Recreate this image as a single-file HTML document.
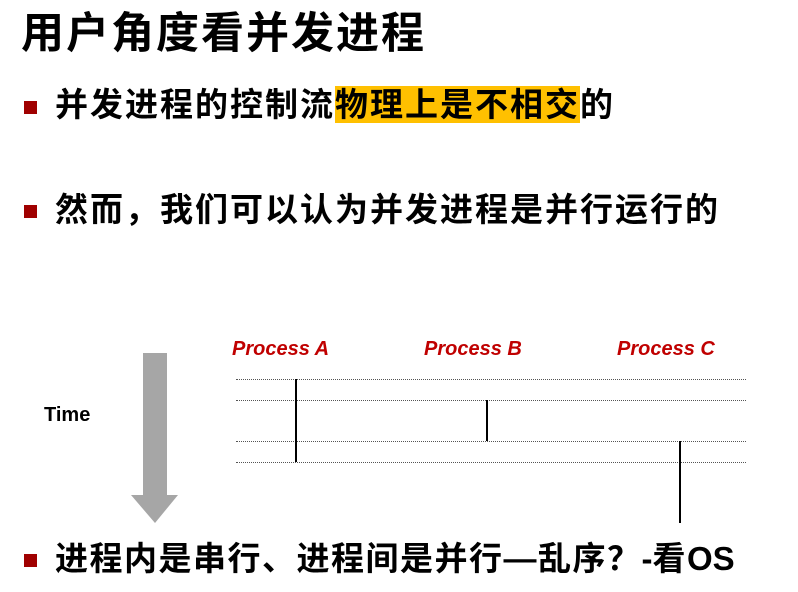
<!DOCTYPE html>
<html><head><meta charset="utf-8"><style>
body{margin:0;width:798px;height:592px;background:#fff;position:relative;overflow:hidden;font-family:"Liberation Sans","Noto Sans CJK SC",sans-serif;}
.t{position:absolute;left:21px;top:8px;font-size:43px;font-weight:bold;letter-spacing:2px;line-height:52px;color:#000;white-space:nowrap}
.b{position:absolute;left:55px;font-size:33px;font-weight:bold;letter-spacing:2px;line-height:46px;white-space:nowrap}
.sq{position:absolute;left:24px;width:13px;height:13px;background:#a00000}
.hl{background:#ffc000}
.dl{position:absolute;left:236px;width:510px;border-top:1px dotted #555}
.v{position:absolute;width:2px;background:#000}
.p{position:absolute;top:338px;font-size:20px;font-weight:bold;font-style:italic;color:#c00000}
.n{letter-spacing:0}
</style></head><body>
<div class="t">用户角度看并发进程</div>
<div class="sq" style="top:101px"></div>
<div class="b" style="top:82px">并发进程的控制流<span class="hl">物理上是不相交</span>的</div>
<div class="sq" style="top:205px"></div>
<div class="b" style="top:187px">然而，我们可以认为并发进程是并行运行的</div>
<div class="sq" style="top:554px"></div>
<div class="b" style="top:536px;letter-spacing:1.5px">进程内是串行、进程间是并行—乱序？<span class="n">-</span>看<span class="n">OS</span></div>
<div class="p" style="left:232px">Process A</div>
<div class="p" style="left:424px">Process B</div>
<div class="p" style="left:617px">Process C</div>
<div style="position:absolute;left:44px;top:404px;font-size:20px;font-weight:bold">Time</div>
<div class="dl" style="top:379px"></div>
<div class="dl" style="top:400px"></div>
<div class="dl" style="top:441px"></div>
<div class="dl" style="top:462px"></div>
<div class="v" style="left:295px;top:379px;height:83px"></div>
<div class="v" style="left:486px;top:400px;height:41px"></div>
<div class="v" style="left:679px;top:441px;height:82px"></div>
<svg style="position:absolute;left:0;top:0" width="798" height="592"><polygon points="143,353 167,353 167,495 178,495 155,523 131,495 143,495" fill="#a6a6a6"/></svg>
</body></html>
